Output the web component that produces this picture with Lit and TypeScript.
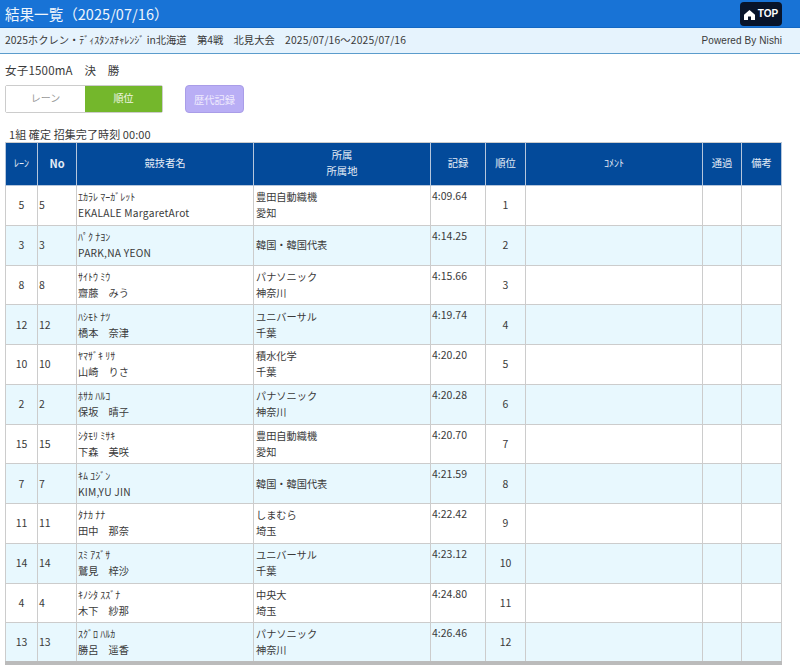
import { LitElement, html, css } from "lit";
import { customElement } from "lit/decorators.js";

interface Row { lane: string; kana: string; name: string; org: string; pref: string; time: string; rank: string; }

const rows: Row[] = [
  { lane: "5", kana: "ｴｶﾗﾚ ﾏｰｶﾞﾚｯﾄ", name: "EKALALE MargaretArot", org: "豊田自動織機", pref: "愛知", time: "4:09.64", rank: "1" },
  { lane: "3", kana: "ﾊﾟｸ ﾅﾖﾝ", name: "PARK,NA YEON", org: "韓国・韓国代表", pref: "", time: "4:14.25", rank: "2" },
  { lane: "8", kana: "ｻｲﾄｳ ﾐｳ", name: "齋藤　みう", org: "パナソニック", pref: "神奈川", time: "4:15.66", rank: "3" },
  { lane: "12", kana: "ﾊｼﾓﾄ ﾅﾂ", name: "橋本　奈津", org: "ユニバーサル", pref: "千葉", time: "4:19.74", rank: "4" },
  { lane: "10", kana: "ﾔﾏｻﾞｷ ﾘｻ", name: "山崎　りさ", org: "積水化学", pref: "千葉", time: "4:20.20", rank: "5" },
  { lane: "2", kana: "ﾎｻｶ ﾊﾙｺ", name: "保坂　晴子", org: "パナソニック", pref: "神奈川", time: "4:20.28", rank: "6" },
  { lane: "15", kana: "ｼﾀﾓﾘ ﾐｻｷ", name: "下森　美咲", org: "豊田自動織機", pref: "愛知", time: "4:20.70", rank: "7" },
  { lane: "7", kana: "ｷﾑ ﾕｼﾞﾝ", name: "KIM,YU JIN", org: "韓国・韓国代表", pref: "", time: "4:21.59", rank: "8" },
  { lane: "11", kana: "ﾀﾅｶ ﾅﾅ", name: "田中　那奈", org: "しまむら", pref: "埼玉", time: "4:22.42", rank: "9" },
  { lane: "14", kana: "ｽﾐ ｱｽﾞｻ", name: "鷲見　梓沙", org: "ユニバーサル", pref: "千葉", time: "4:23.12", rank: "10" },
  { lane: "4", kana: "ｷﾉｼﾀ ｽｽﾞﾅ", name: "木下　紗那", org: "中央大", pref: "埼玉", time: "4:24.80", rank: "11" },
  { lane: "13", kana: "ｽｸﾞﾛ ﾊﾙｶ", name: "勝呂　遥香", org: "パナソニック", pref: "神奈川", time: "4:26.46", rank: "12" },
];

@customElement("app-root")
export class AppRoot extends LitElement {
  static styles = css`
    :host {
      display: block;
      width: 800px;
      height: 666px;
      overflow: hidden;
      background: #fff;
      color: #3a3a3a;
      font-family: "Noto Sans CJK JP", "Noto Sans", sans-serif;
      font-size: 11px;
    }
    .top {
      height: 27px;
      background: #1873d6;
      border-bottom: 1px solid #1368c4;
      display: flex;
      align-items: center;
      justify-content: space-between;
      padding: 0 18px 0 5px;
      color: #eef5fc;
      font-size: 14.5px;
      letter-spacing: 0.05px;
    }
    .top-btn {
      width: 42px;
      height: 24px;
      box-sizing: border-box;
      background: #08142a;
      border-radius: 4px;
      color: #fff;
      display: flex;
      align-items: center;
      justify-content: center;
      gap: 3px;
      letter-spacing: 0;
      font: bold 10px "Liberation Sans", sans-serif;
    }
    .top-btn svg { margin-top: 2px; }
    .sub {
      height: 25px;
      background: #e6f3fd;
      border-bottom: 1px solid #5b9ccc;
      display: flex;
      align-items: center;
      justify-content: space-between;
      padding: 0 18px 0 5px;
      font-size: 10.3px;
    }
    .sub-text { margin-top: -2px; }
    .half { font-size: 10px; }
    .dates { letter-spacing: 0.15px; }
    .powered {
      font: 10px "Liberation Sans", sans-serif;
      letter-spacing: 0.1px;
    }
    .race {
      margin: 8px 0 0 5px;
      height: 16px;
      line-height: 16px;
      font-size: 11.5px;
      letter-spacing: 0.2px;
    }
    .controls {
      display: flex;
      align-items: stretch;
      gap: 22px;
      margin: 7px 0 0 5px;
      height: 28px;
    }
    .toggle {
      display: flex;
      width: 158px;
      box-sizing: border-box;
      border: 1px solid #ccc;
      border-radius: 2px;
      font-size: 10px;
    }
    .toggle span {
      display: flex;
      align-items: center;
      justify-content: center;
      padding-bottom: 3px;
    }
    .lane-off { width: 79px; color: #999; background: #fff; }
    .rank-on { flex: 1; color: #f2f8e8; background: #74b72c; }
    .history {
      width: 59px;
      box-sizing: border-box;
      background: #b9aef5;
      border: 1px solid #a99de8;
      border-radius: 4px;
      color: #eeeafd;
      display: flex;
      align-items: center;
      justify-content: center;
      font-size: 10.25px;
    }
    .group {
      margin: 13px 0 0 9px;
      height: 16px;
      line-height: 16px;
      font-size: 11px;
      letter-spacing: 0.1px;
    }
    table {
      border-collapse: collapse;
      table-layout: fixed;
      width: 776px;
      margin: 0 0 0 5px;
      border-bottom: 4px solid #bbb;
    }
    th, td {
      border: 1px solid #ccc;
      padding: 0;
      font-weight: normal;
      overflow: hidden;
      white-space: nowrap;
    }
    th {
      background: #034a9a;
      color: #e4ecf6;
      height: 40px;
      font-size: 10.3px;
      line-height: 16px;
      text-align: center;
      border-color: #b5c6dc;
      border-top-color: #ccc;
      padding-bottom: 2px;
    }
    th.tiny { font-size: 10px; }
    th.bold { font-weight: bold; font-size: 11px; }
    tbody tr { height: 39.75px; background: #fff; }
    tbody tr:nth-child(even) { background: #e8f8fe; }
    td { font-size: 10.5px; line-height: 16px; vertical-align: middle; }
    td.lane, td.rank { text-align: center; }
    td.no { padding-left: 1px; }
    td.athlete { padding-left: 1px; }
    .kana { font-size: 10px; line-height: 16px; display: block; }
    .name { display: block; line-height: 16px; font-size: 10.2px; }
    .name.latin { letter-spacing: 0.25px; }
    td.org { padding-left: 2px; font-size: 10.2px; }
    td.org span { display: block; }
    td.time { vertical-align: top; padding: 2px 0 0 1px; }
  `;

  render() {
    return html`
      <div class="top">
        <span>結果一覧（2025/07/16）</span>
        <div class="top-btn">
          <svg width="11" height="10" viewBox="0 0 11 10" aria-hidden="true">
            <path fill="#fff" d="M5.5 0 L11 4.8 V10 H7 V6.5 H4 V10 H0 V4.8 Z" />
          </svg>
          <span>TOP</span>
        </div>
      </div>
      <div class="sub">
        <span class="sub-text">2025ホクレン・<span class="half">ﾃﾞｨｽﾀﾝｽﾁｬﾚﾝｼﾞ</span> in北海道　第4戦　北見大会　<span class="dates">2025/07/16～2025/07/16</span></span>
        <span class="powered">Powered By Nishi</span>
      </div>
      <div class="race">女子1500mA　決　勝</div>
      <div class="controls">
        <div class="toggle">
          <span class="lane-off">レーン</span>
          <span class="rank-on">順位</span>
        </div>
        <div class="history">歴代記録</div>
      </div>
      <div class="group">1組 確定 招集完了時刻 00:00</div>
      <table>
        <colgroup>
          <col style="width:32px" />
          <col style="width:39px" />
          <col style="width:177px" />
          <col style="width:177px" />
          <col style="width:55px" />
          <col style="width:40px" />
          <col style="width:177px" />
          <col style="width:39px" />
          <col style="width:40px" />
        </colgroup>
        <thead>
          <tr>
            <th class="tiny">ﾚｰﾝ</th>
            <th class="bold">No</th>
            <th>競技者名</th>
            <th>所属<br />所属地</th>
            <th>記録</th>
            <th>順位</th>
            <th class="tiny">ｺﾒﾝﾄ</th>
            <th>通過</th>
            <th>備考</th>
          </tr>
        </thead>
        <tbody>
          ${rows.map(
            (r) => html`
              <tr>
                <td class="lane">${r.lane}</td>
                <td class="no">${r.lane}</td>
                <td class="athlete">
                  <span class="kana">${r.kana}</span>
                  <span class="name ${/^[A-Z]/.test(r.name) ? "latin" : ""}">${r.name}</span>
                </td>
                <td class="org">
                  <span>${r.org}</span>
                  ${r.pref ? html`<span>${r.pref}</span>` : ""}
                </td>
                <td class="time">${r.time}</td>
                <td class="rank">${r.rank}</td>
                <td></td>
                <td></td>
                <td></td>
              </tr>
            `
          )}
        </tbody>
      </table>
    `;
  }
}
